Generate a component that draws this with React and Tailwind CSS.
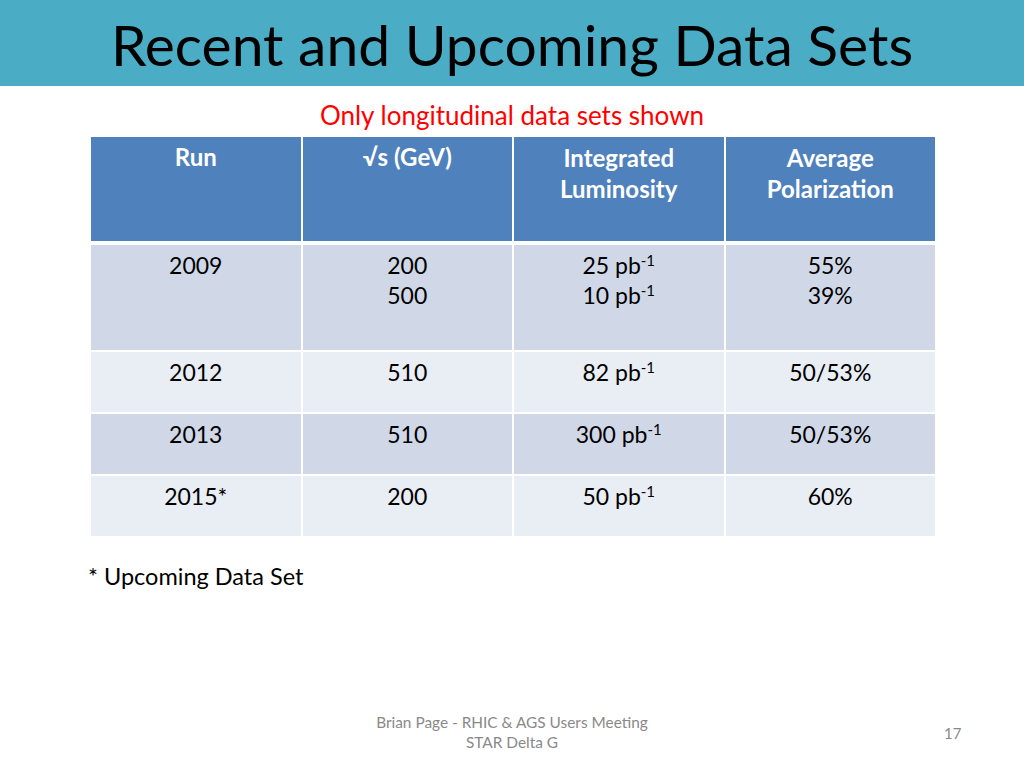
import React from "react";

const rows = [
  { run: "2009", energy: ["200", "500"], lumi: ["25", "10"], pol: ["55%", "39%"], h: "h-[105px]", bg: "bg-[#D0D8E8]" },
  { run: "2012", energy: ["510"], lumi: ["82"], pol: ["50/53%"], h: "h-[60px]", bg: "bg-[#E9EDF4]" },
  { run: "2013", energy: ["510"], lumi: ["300"], pol: ["50/53%"], h: "h-[60px]", bg: "bg-[#D0D8E8]" },
  { run: "2015*", energy: ["200"], lumi: ["50"], pol: ["60%"], h: "h-[60px]", bg: "bg-[#E9EDF4]" },
];

function Cell({ bg, children }) {
  return (
    <div className={`${bg} flex flex-col items-center pt-[5px] leading-[30px]`}>
      {children}
    </div>
  );
}

export default function App() {
  return (
    <div className="w-[1024px] h-[768px] bg-white relative overflow-hidden font-['Lato','Liberation_Sans',sans-serif] text-black">
      <div className="h-[86px] bg-[#4BACC6] flex items-center justify-center">
        <h1 className="text-[57px] leading-none pt-[2px]">Recent and Upcoming Data Sets</h1>
      </div>

      <p className="mt-[13px] text-center text-[#FF0000] text-[26px] leading-[32px]">
        Only longitudinal data sets shown
      </p>

      <div className="ml-[91px] mt-[6px] w-[844px] flex flex-col">
        <div className="grid grid-cols-4 gap-x-[2px] h-[104px] text-white font-bold text-[24px]">
          <Cell bg="bg-[#4F81BD]">Run</Cell>
          <Cell bg="bg-[#4F81BD]">√s (GeV)</Cell>
          <Cell bg="bg-[#4F81BD]">
            <span className="leading-[31px]">Integrated</span>
            <span className="leading-[31px]">Luminosity</span>
          </Cell>
          <Cell bg="bg-[#4F81BD]">
            <span className="leading-[31px]">Average</span>
            <span className="leading-[31px]">Polarization</span>
          </Cell>
        </div>
        <div className="h-[4px]" />
        {rows.map((r) => (
          <div key={r.run} className={`grid grid-cols-4 gap-x-[2px] mb-[2px] ${r.h} text-[23px]`}>
            <Cell bg={r.bg}>{r.run}</Cell>
            <Cell bg={r.bg}>
              {r.energy.map((e) => (
                <span key={e}>{e}</span>
              ))}
            </Cell>
            <Cell bg={r.bg}>
              {r.lumi.map((l) => (
                <span key={l}>
                  {l} pb<sup className="text-[15px] -top-[8px]">-1</sup>
                </span>
              ))}
            </Cell>
            <Cell bg={r.bg}>
              {r.pol.map((p) => (
                <span key={p}>{p}</span>
              ))}
            </Cell>
          </div>
        ))}
      </div>

      <p className="ml-[88px] mt-[23px] text-[23.5px] leading-[30px]">* Upcoming Data Set</p>

      <div className="absolute left-0 right-0 bottom-[16px] flex justify-center">
        <div className="text-center text-[#898989] text-[15.4px] leading-[20px]">
          <p>Brian Page - RHIC &amp; AGS Users Meeting</p>
          <p>STAR Delta G</p>
        </div>
      </div>
      <p className="absolute left-[944px] top-[723px] text-[#898989] text-[15px] leading-[20px]">17</p>
    </div>
  );
}
